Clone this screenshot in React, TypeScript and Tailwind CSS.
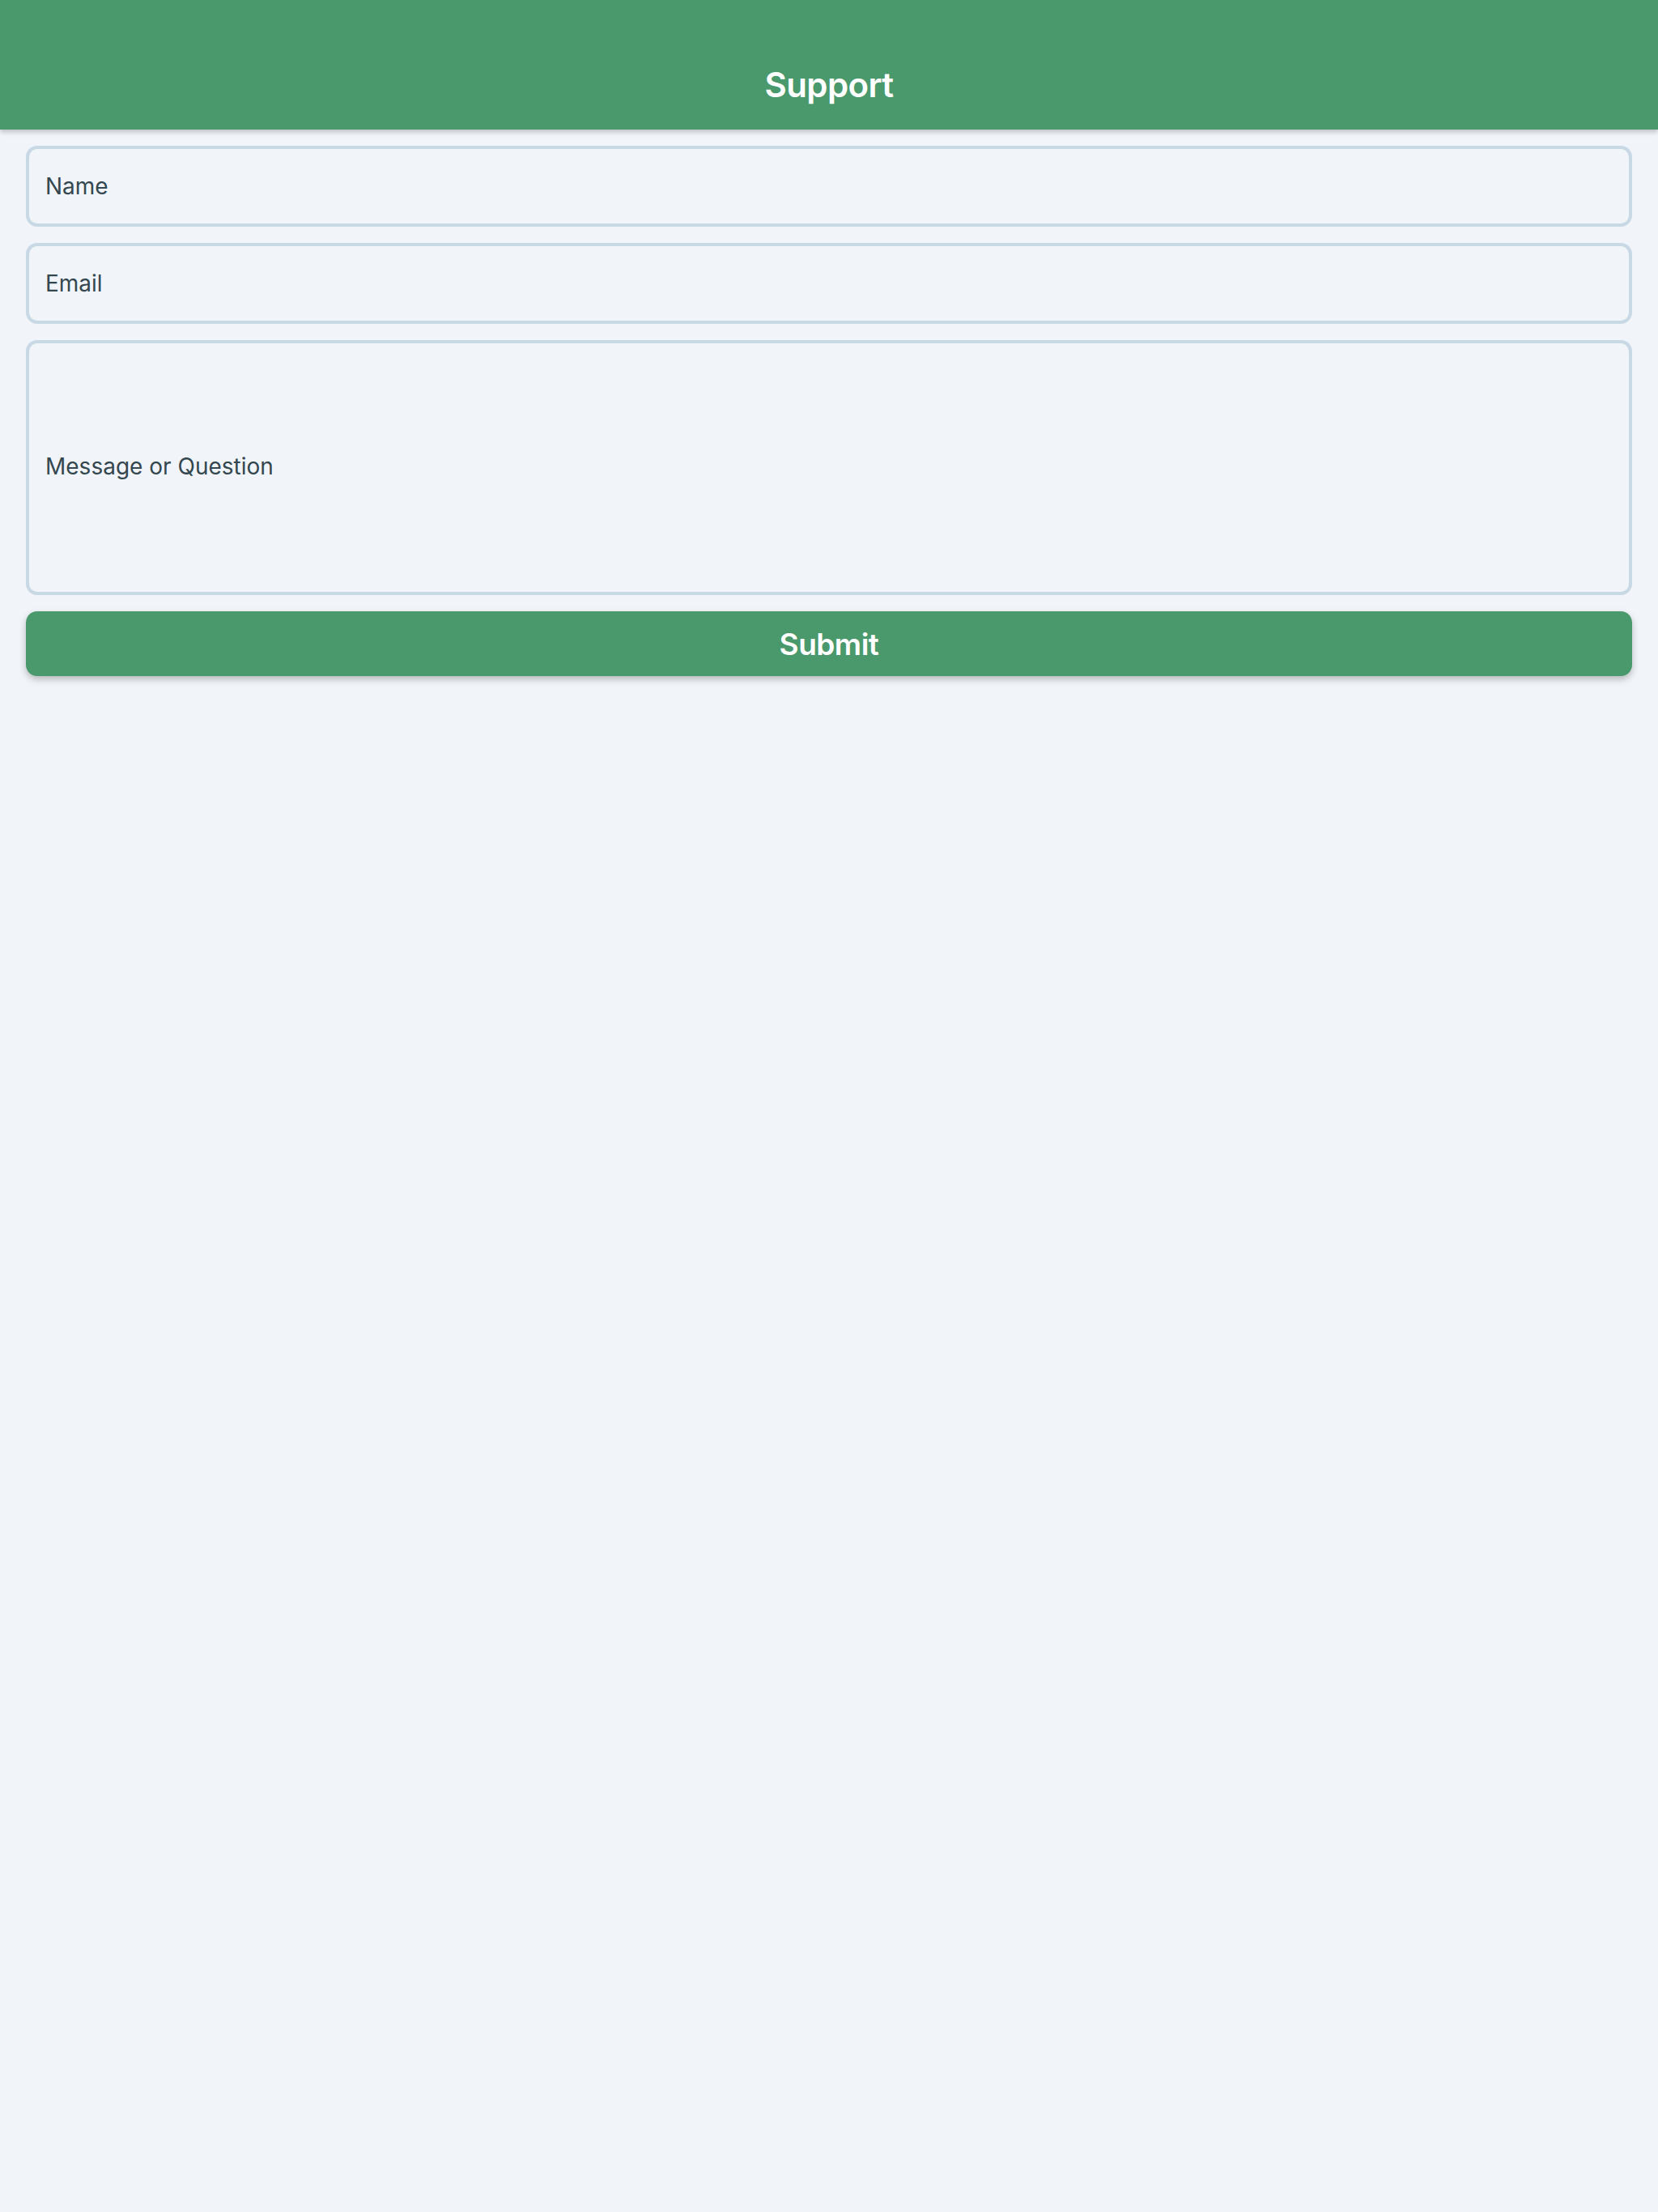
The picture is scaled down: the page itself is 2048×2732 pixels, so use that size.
import React, { useState } from "react";

const font = { fontFamily: "Inter, 'Noto Sans', sans-serif" };

const App: React.FC = () => {
  const [name, setName] = useState("");
  const [email, setEmail] = useState("");
  const [message, setMessage] = useState("");

  const handleSubmit = (e: React.FormEvent) => {
    e.preventDefault();
  };

  return (
    <div className="min-h-[2732px] bg-[#f1f5f9]" style={font}>
      {/* Header */}
      <header className="h-[160px] bg-[#4a996c] shadow-[0_3px_6px_rgba(0,0,0,0.22)] flex items-end justify-center pb-[34px] relative z-10">
        <h1 className="text-white text-[42px] font-semibold tracking-[-0.6px] leading-none">Support</h1>
      </header>

      <form onSubmit={handleSubmit} className="px-8 pt-5 flex flex-col gap-5">
        <input
          type="text"
          placeholder="Name"
          value={name}
          onChange={(e) => setName(e.target.value)}
          className="h-[100px] w-full rounded-[14px] border-4 border-[#c8d8e4] bg-[#f1f5f9] px-5 text-[28px] text-[#34474f] placeholder:text-[#34474f] focus:outline-none"
        />
        <input
          type="email"
          placeholder="Email"
          value={email}
          onChange={(e) => setEmail(e.target.value)}
          className="h-[100px] w-full rounded-[14px] border-4 border-[#c8d8e4] bg-[#f1f5f9] px-5 text-[28px] text-[#34474f] placeholder:text-[#34474f] focus:outline-none"
        />
        <textarea
          placeholder="Message or Question"
          value={message}
          onChange={(e) => setMessage(e.target.value)}
          className="h-[315px] w-full resize-none rounded-[14px] border-4 border-[#c8d8e4] bg-[#f1f5f9] px-5 pt-[134px] leading-[36px] text-[28px] text-[#34474f] placeholder:text-[#34474f] focus:outline-none"
        />
        <button
          type="submit"
          className="h-[80px] w-full rounded-[14px] bg-[#4a996c] pt-[2px] text-white text-[37px] font-semibold tracking-[-0.5px] shadow-[0_4px_8px_rgba(0,0,0,0.25)]"
        >
          Submit
        </button>
      </form>
    </div>
  );
};

export default App;
